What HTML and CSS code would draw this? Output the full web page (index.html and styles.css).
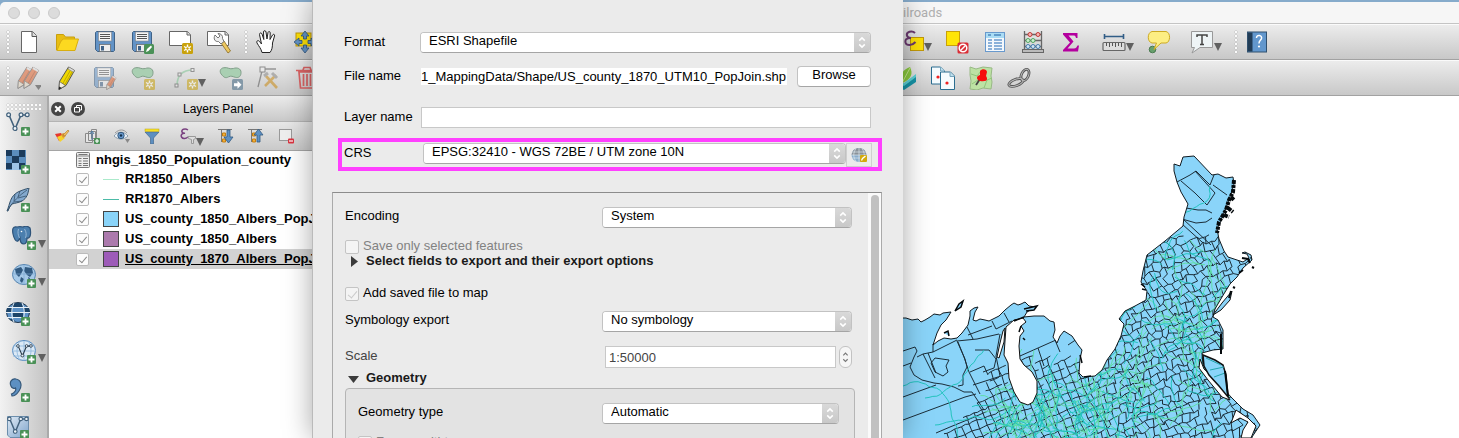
FILE: index.html
```html
<!DOCTYPE html>
<html lang="en">
<head>
<meta charset="utf-8">
<title>Railroads</title>
<link rel="stylesheet" href="styles.css">
</head>
<body>
<svg class="defs" aria-hidden="true">
  <defs>
    <linearGradient id="plate" x1="0" y1="0" x2="1" y2="1"><stop offset="0" stop-color="#dfeaf5"/><stop offset="1" stop-color="#7fa5cc"/></linearGradient>
  </defs>
  <symbol id="plus" viewBox="0 0 9 9"><rect width="9" height="9" rx="1" fill="#4a9157"/><path d="M4.5 1.5v6M1.5 4.5h6" stroke="#fff" stroke-width="1.8"/></symbol>
  <symbol id="spark" viewBox="0 0 11 11"><rect width="11" height="11" rx="1.5" fill="#c9a20c"/><path d="M5.500 1.500v8M2 3.500l7 4M9 3.500l-7 4" stroke="#fff" stroke-width="1.400"/><circle cx="5.500" cy="5.500" r="1.700" fill="#c9a20c" stroke="#fff"/></symbol>
  <symbol id="floppy" viewBox="0 0 20 21"><path d="M1.500 .5h17l1 1v18l-1 1h-16l-2-2v-17z" fill="#6393c6" stroke="#3f6287"/><rect x="3.500" y="1" width="13" height="9" fill="#f5f5f5" stroke="#888" stroke-width=".6"/><path d="M5 3.500h10M5 5.500h10M5 7.500h10" stroke="#555"/><rect x="4.500" y="13.500" width="11" height="7" fill="#eee" stroke="#666" stroke-width=".7"/><rect x="6" y="15" width="3" height="4.500" fill="#3f6287"/></symbol>
  <symbol id="pencil" viewBox="0 0 18 24"><path d="M10.500 1l6 3.500-8.500 15-7 4 .5-8z" fill="#efd800" stroke="#555" stroke-width="1"/><path d="M11 1l5.500 3.300-1 1.900L10 3z" fill="#ddd" stroke="#777" stroke-width=".6"/><path d="M12 5L4 19M14 6L6 20" stroke="#b29c00" stroke-width=".8"/><path d="M1.500 15.500l6 4-6.500 4z" fill="#f2eee1" stroke="#555" stroke-width=".7"/><path d="M1.200 20.500l2.500 1.500-3 1.700z" fill="#222"/></symbol>
  <symbol id="redpencil" viewBox="0 0 18 24"><path d="M10.500 1l6 3.500-8.500 15-7 4 .5-8z" fill="#e06430" stroke="#555" stroke-width="1"/><path d="M11 1l5.500 3.300-1 1.900L10 3z" fill="#ddd"/><path d="M13 5L5 19" stroke="#a8431c" stroke-width="1"/><path d="M1.500 15.500l6 4-6.500 4z" fill="#e9dcc6" stroke="#555" stroke-width=".7"/></symbol>
  <symbol id="blob" viewBox="0 0 24 14"><path d="M3 9C0 6 1 2 5 1.500c4-.8 6 2 10 .8 4-1.500 8 .2 8 4s-2 6.200-6 5.200c-3-.7-4-2-7-.5-3 1.800-5 .5-7-2z" fill="#a9cfb2" stroke="#7d9c86"/></symbol>
  <symbol id="updown" viewBox="0 0 8 14"><path d="M1 5l3-3 3 3M1 9l3 3 3-3" fill="none" stroke="#fff" stroke-width="1.600"/></symbol>
  <symbol id="nodes" viewBox="0 0 24 20"><path d="M3 3l6 14 6-14h7" fill="none" stroke="currentColor" stroke-width="1.600"/><g fill="#eef4f8" stroke="currentColor" stroke-width="1.200"><circle cx="2.600" cy="2.800" r="1.900"/><circle cx="9" cy="16.500" r="2"/><circle cx="15" cy="2.800" r="1.900"/><circle cx="21.200" cy="2.800" r="1.900"/></g></symbol>
</svg>

<div class="window">
  <header class="titlebar">
    <div class="lights"><span class="light"></span><span class="light"></span><span class="light"></span></div>
    <span class="title">Railroads</span>
  </header>

  <div class="toolbar">
    <div class="tools">
      <span class="grip"></span>
      <button class="tool" aria-label="New project"><svg class="icon" viewBox="0 0 24 24"><path d="M4.500 1.500h11l4 4v17h-15z" fill="#fff" stroke="#666"/><path d="M15 1.500v5h5" fill="#ddd" stroke="#555"/></svg></button>
      <button class="tool" aria-label="Open project"><svg class="icon" viewBox="0 0 24 24"><path d="M1.500 20V4.500h7l2 2.500h9V20z" fill="#e8bd12" stroke="#c89f0d"/><path d="M2 20.500L5.500 12 8 9h15.500L20 20.500z" fill="#fcd920" stroke="#d8ae10"/></svg></button>
      <button class="tool" aria-label="Save project"><svg class="icon" viewBox="0 0 24 24"><use href="#floppy" x="2" y="1" width="20" height="21"/></svg></button>
      <button class="tool" aria-label="Save project as"><svg class="icon" viewBox="0 0 24 24"><use href="#floppy" x="1" y="1" width="20" height="21"/><rect x="13" y="14" width="10" height="10" rx="1.500" fill="#4a9157"/><path d="M15 22l1-3 4-3.500 1 1.500-3.500 4z" fill="#fff"/></svg></button>
      <button class="tool" aria-label="New print composer"><svg class="icon" viewBox="0 0 24 24"><path d="M.5 1.500h18l3 3v11H.5z" fill="#fff" stroke="#666"/><path d="M18 1.500v3.500h4" fill="#ddd" stroke="#666"/><use href="#spark" x="13" y="13" width="11" height="11"/></svg></button>
      <button class="tool" aria-label="Composer manager"><svg class="icon" viewBox="0 0 24 24"><path d="M.5 1.500h18l3 3v11H.5z" fill="#fff" stroke="#666"/><path d="M18 1.500v3.500h4" fill="#ddd" stroke="#666"/><path d="M14 13l3-2 6.500 10-2.500 2z" fill="#edc860" stroke="#886a25" stroke-width=".8"/><path d="M8 5l3 3 2-2-2-2.500c3 0 5 2 4.500 5l1.500 3-3 2.500-2.500-2.500C8 12 6 9 8 5z" fill="#eee" stroke="#666" stroke-width=".9"/></svg></button>
      <span class="grip"></span>
      <button class="tool" aria-label="Pan map"><svg class="icon" viewBox="0 0 24 24"><path d="M7 22.500c-1-4-3-6-5-9.500-1-2.500 1.500-3 2.500-1.500L6.500 14 4.500 4.500c0-2 2-2 2.500-.5l1.800 5.500L8.500 2c.2-1.800 2.200-1.800 2.500 0l1 7 1-6.500c.5-1.500 2.200-1.200 2.200.4L15 9.500 17.500 5c1-1.400 2.600-.5 2 1L17.500 13c0 4-.5 7-2.500 9.500z" fill="#fff" stroke="#222" stroke-width="1"/></svg></button>
      <button class="tool" aria-label="Pan to selection"><svg class="icon" viewBox="0 0 24 24"><rect x="3" y="3" width="15" height="13" fill="#ffe207" stroke="#c39a08"/><path d="M12 1l4 5h-2.500v3h-3V6H8zM12 23l4-5h-2.500v-3h-3v3H8zM1 12l5-4v2.500h3v3H6V16zM23 12l-5-4v2.500h-3v3h3V16z" fill="#6393c6" stroke="#31567d" stroke-width=".8"/></svg></button>
    </div>
    <div class="tools">
      <button class="tool tool-menu" aria-label="Select by expression"><svg class="icon" viewBox="0 0 24 24"><rect x="10.500" y="7.500" width="13" height="13" fill="#ffe207" stroke="#c39a08"/><path d="M15 3c-3-3-9-1-8 2.500C7.500 8 11 8 11 8c-5 0-6 2-5.500 4.500C6.500 16 12 16 15.500 12" fill="none" stroke="#6b3a70" stroke-width="2"/></svg><span class="caret"></span></button>
      <button class="tool" aria-label="Deselect all"><svg class="icon" viewBox="0 0 24 24"><rect x="1.500" y="1.500" width="13" height="14" fill="#ffe507" stroke="#c9a10a"/><rect x="12.500" y="12.500" width="11" height="11" rx="1.500" fill="#da2e36"/><circle cx="18" cy="18" r="3.800" fill="none" stroke="#fff" stroke-width="1.500"/><path d="M15.500 20.500l5-5" stroke="#fff" stroke-width="1.500"/></svg></button>
      <button class="tool" aria-label="Attribute table"><svg class="icon" viewBox="0 0 24 24"><rect x="2.500" y="2.500" width="19" height="19" fill="#f4f8fc" stroke="#6899cd"/><rect x="3" y="3" width="18" height="5" fill="#aadcf4"/><path d="M5 5h3M11 5h7" stroke="#4c86bd" stroke-width="1.600"/><path d="M5 10h4M11 10h8M5 13h4M11 13h8M5 16h4M11 16h8M5 19h4M11 19h8" stroke="#6899cd" stroke-width="1.300"/></svg></button>
      <button class="tool" aria-label="Field calculator"><svg class="icon" viewBox="0 0 24 24"><path d="M3.500 1v20M20.500 1v20M3 4.500h18M3 10.500h18M3 16.500h18" stroke="#666" stroke-width="1.300"/><rect x="1.500" y="19.500" width="21" height="3" fill="#bbb" stroke="#666"/><g fill="#f6b5b3" stroke="#c13735"><circle cx="9" cy="4.500" r="2"/><circle cx="17" cy="4.500" r="2"/></g><g fill="#c9efcd" stroke="#53a462"><circle cx="7" cy="10.500" r="2"/><circle cx="12" cy="10.500" r="2"/></g><g fill="#cfe4f5" stroke="#447cab"><circle cx="7" cy="16.500" r="2"/><circle cx="12" cy="16.500" r="2"/><circle cx="17" cy="16.500" r="2"/></g></svg></button>
      <button class="tool" aria-label="Statistical summary"><svg class="icon" viewBox="0 0 24 24"><path d="M4 3h14.500v5h-1.500c-.5-2-1-2.500-3-2.500H9.500l5 6-6 7H15c2 0 2.500-1 3.500-3H20l-1 6H4v-1.500l7-7.500-7-8z" fill="#b4009e"/></svg></button>
      <button class="tool tool-menu" aria-label="Measure"><svg class="icon" viewBox="0 0 24 24"><path d="M2 6.500h20M2.500 4v5M21.500 4v5" stroke="#315d86" stroke-width="1.600"/><rect x="1" y="12.500" width="22" height="8" rx="1" fill="#ddd" stroke="#666" stroke-width="1.200"/><path d="M4.500 13v3M7.500 13v4M10.500 13v3M13.500 13v4M16.500 13v3M19.500 13v4" stroke="#555"/></svg><span class="caret"></span></button>
      <button class="tool" aria-label="Map tips"><svg class="icon" viewBox="0 0 24 24"><circle cx="5.500" cy="19.500" r="3.300" fill="#68a06c" stroke="#497a50"/><path d="M5 1.500h14c5 1 4.500 11 0 11.500h-5L7 19.500 9.500 13H5c-5-1-5-10.500 0-11.500z" fill="#fdee83" stroke="#cdaa23"/></svg></button>
      <button class="tool tool-menu" aria-label="Text annotation"><svg class="icon" viewBox="0 0 24 24"><path d="M1.500 1.500h21v16H10L2 23l2.500-5.500h-3z" fill="#eef4f6" stroke="#999"/><path d="M7 7V5h10v2M12 5v9.500M10 14.500h4" fill="none" stroke="#444" stroke-width="1.500"/></svg><span class="caret"></span></button>
      <span class="grip"></span>
      <button class="tool" aria-label="Help"><svg class="icon" viewBox="0 0 24 24"><rect x="2.500" y="2" width="19" height="20" fill="#6297cd" stroke="#30506e"/><rect x="3" y="2.500" width="4.500" height="19" fill="#213c56"/><path d="M11.500 8c0-4 6-3 5 .5-.8 2-2.500 2-2.500 5" fill="none" stroke="#fff" stroke-width="1.500"/><circle cx="14" cy="16.500" r="1.100" fill="#fff"/></svg></button>
    </div>
  </div>

  <div class="toolbar">
    <div class="tools">
      <span class="grip"></span>
      <button class="tool" aria-label="Current edits"><svg class="icon faded" viewBox="0 0 24 24"><use href="#redpencil" x="0" y="0" width="17" height="23"/><use href="#redpencil" x="6" y="0" width="17" height="23"/><path d="M18 19h7l-3.500 5z" fill="#444"/></svg></button>
      <button class="tool" aria-label="Toggle editing"><svg class="icon" viewBox="0 0 24 24"><use href="#pencil" x="3" y="0" width="18" height="24"/></svg></button>
      <button class="tool" aria-label="Save layer edits"><svg class="icon faded" viewBox="0 0 24 24"><use href="#floppy" x="1" y="1" width="20" height="21"/><use href="#redpencil" x="13" y="9" width="11" height="15"/></svg></button>
      <button class="tool" aria-label="Add feature"><svg class="icon" viewBox="0 0 24 24"><use href="#blob" x="0" y="0" width="23" height="14"/><g class="faded"><use href="#spark" x="13" y="13" width="11" height="11"/></g></svg></button>
      <button class="tool tool-menu" aria-label="Add circular string"><svg class="icon faded" viewBox="0 0 24 24"><path d="M3 20C3 10 8 4 19 4" fill="none" stroke="#7fc493" stroke-width="1.600"/><g fill="#eee" stroke="#555"><rect x="1" y="18" width="3" height="3"/><rect x="4" y="7" width="3" height="3"/><rect x="17" y="2.500" width="3" height="3"/></g><use href="#spark" x="13" y="13" width="11" height="11"/></svg><span class="caret"></span></button>
      <button class="tool" aria-label="Move feature"><svg class="icon" viewBox="0 0 24 24"><use href="#blob" x="0" y="0" width="23" height="14"/><rect x="13" y="13" width="11" height="11" rx="1.500" fill="#8499a8"/><path d="M15 17.200h3.500v-2.500l4 4-4 4v-2.500H15z" fill="#fff"/></svg></button>
      <button class="tool" aria-label="Node tool"><svg class="icon faded" viewBox="0 0 24 24"><path d="M6 3h13M5 5L1 21" fill="none" stroke="#555" stroke-width="1.300"/><rect x="3" y="1" width="5" height="5" fill="#eee" stroke="#444"/><path d="M8 20L19 9M9 10l11 12" stroke="#c98a13" stroke-width="2.600"/><path d="M15 7l5 5M7 10l4-3" stroke="#888" stroke-width="3"/></svg></button>
      <button class="tool" aria-label="Delete selected"><svg class="icon" viewBox="0 0 24 24"><path d="M4 6h16l-1.500 16h-13zM1 4.500h22M8 4l1-2.500h6L16 4M8.500 8v12M12 8v12M15.500 8v12" fill="none" stroke="#db6465" stroke-width="1.700"/></svg></button>
    </div>
    <div class="tools tools-plugins">
      <button class="tool" aria-label="Open layers"><svg class="icon" viewBox="0 0 24 24"><path d="M2 13l9 5 12-9v7l-12 8-9-5z" fill="#1693a6"/><path d="M2 13l9 4 12-9v3l-12 9-9-5z" fill="#5cd0d4"/><path d="M9 17C5 9 11 3 17 1c3 6 2 12-8 16z" fill="#89c93c"/><path d="M9 17l8-15" stroke="#c5e68f"/></svg></button>
      <button class="tool" aria-label="Copy coordinates"><svg class="icon" viewBox="0 0 24 24"><g fill="#f5fbfe" stroke="#2a6d90"><path d="M.5 1h9l4 4v13H.5z"/><path d="M9.500 6h10l4 4v13.500h-14z"/></g><path d="M9.500 1v4h4M19 6v4.500h4.500" fill="#bfe0ef" stroke="#76a5bd"/><circle cx="7" cy="11" r="1.600" fill="#ef2222"/><circle cx="16" cy="17" r="1.600" fill="#ef2222"/></svg></button>
      <button class="tool" aria-label="Pin point"><svg class="icon" viewBox="0 0 24 24"><path d="M1 1l6 2 7-2 9 1-1 8 1 6-1 7-8-1-6 2-7-1 1-8-1-6z" fill="#bde2a4" stroke="#98b985"/><path d="M2 8l6 2 4-5M15 22l3-8 5-2M3 18l6-4" stroke="#91c47a" fill="none"/><path d="M11 13L7 19" stroke="#444" stroke-width="1.800"/><path d="M11 5c2-3 7-2 7 1l-1 4c2 3 1 5-2 5-3 1-7-1-7-3s1-2 3-3z" fill="#f60d0d"/></svg></button>
      <button class="tool" aria-label="Link"><svg class="icon" viewBox="0 0 24 24"><g fill="none" stroke="#555" stroke-width="2.800"><ellipse cx="18" cy="9" rx="3.500" ry="6" transform="rotate(25 18 9)"/><ellipse cx="9" cy="16.500" rx="7.500" ry="3.200" transform="rotate(-20 9 16.500)"/></g><g fill="none" stroke="#bbb"><ellipse cx="18" cy="9" rx="3.500" ry="6" transform="rotate(25 18 9)"/><ellipse cx="9" cy="16.500" rx="7.500" ry="3.200" transform="rotate(-20 9 16.500)"/></g></svg></button>
    </div>
  </div>

  <main class="workspace">
    <nav class="sidebar" aria-label="Add layers">
      <span class="grip-flat"></span>
      <button class="add" aria-label="Add vector layer"><svg class="add-icon" viewBox="0 0 25 25"><g color="#42617c"><use href="#nodes" x="0" y="0" width="24" height="20"/></g><use href="#plus" x="15" y="15" width="9" height="9"/></svg></button>
      <button class="add" aria-label="Add raster layer"><svg class="add-icon" viewBox="0 0 25 25"><path d="M0 0h20v20H0z" fill="#5b8dbd"/><path d="M0 0h6v6H0zM13 0h6v7h-6zM6 6h7v7H6zM0 13h6v6H0zM13 13h6v6h-6z" fill="#1c3b5b"/><path d="M6 13h7v7H6z" fill="#9dc3e6"/><use href="#plus" x="15" y="15" width="9" height="9"/></svg></button>
      <button class="add" aria-label="Add SpatiaLite layer"><svg class="add-icon" viewBox="0 0 25 25"><path d="M1 23C4 16 4 8 12 4c4-2 8-3 11-4-1 6-2 10-7 13-4 2-7 2-10 3-2 2-3 4-4 7z" fill="#83a9ce" stroke="#36526b"/><path d="M2 22C7 13 14 7 21 2M8 13l1-7M12 9l2-6M8 14l8-1M12 10l8-2" stroke="#36526b" fill="none" stroke-width=".8"/><use href="#plus" x="15" y="15" width="9" height="9"/></svg></button>
      <button class="add add-menu" aria-label="Add PostGIS layer"><svg class="add-icon" viewBox="0 0 25 25"><path d="M5 1C1 0 0 3 1 8c1 5 3 8 5 7l2-3c0 4 1 6 4 6 3-.5 3-4 3-6 4 1 4-6 3-10-2-2-5-2-7-1C9 .5 7 .5 5 1z" fill="#4b7fae" stroke="#2e5379" stroke-width="1.200"/><path d="M6.500 3c-1 3-.5 6 1 9M12.500 3c2 3 2 6 1 9" stroke="#9dbcd8" fill="none" stroke-width=".9"/><circle cx="9.500" cy="5.500" r=".8" fill="#fff"/><use href="#plus" x="15" y="15" width="9" height="9"/></svg><span class="caret"></span></button>
      <button class="add add-menu" aria-label="Add WMS layer"><svg class="add-icon" viewBox="0 0 25 25"><ellipse cx="12" cy="10.500" rx="11.500" ry="10" fill="#a6c9e8" stroke="#5685b1"/><path d="M3 5l6-2 2 3-2 4-2 3-3-3zM13 3l7 1 1 5-3 4-3-2-3-4zM9 13l3 2-2 4-2-2zM16 13l2 1-1 3z" fill="#315a81"/><path d="M1 10h22M12 1v20" stroke="#7ba7d0" stroke-width=".7"/><use href="#plus" x="15" y="15" width="9" height="9"/></svg><span class="caret"></span></button>
      <button class="add" aria-label="Add WCS layer"><svg class="add-icon" viewBox="0 0 25 25"><ellipse cx="12" cy="10.500" rx="11.500" ry="10" fill="#5d92c7" stroke="#20364c"/><path d="M7 1h9l1 4H6zM1 6h5v5H0zM18 6h5l1 5h-6zM7 11h10v5H7zM3 17h4l3 3z" fill="#1c4469"/><path d="M1 5.500h22M0 10.500h24M1 15.500h22M8 1c-3 6-3 13 0 19M16 1c3 6 3 13 0 19" stroke="#e8f1f9" fill="none"/><use href="#plus" x="15" y="15" width="9" height="9"/></svg></button>
      <button class="add add-menu" aria-label="Add WFS layer"><svg class="add-icon" viewBox="0 0 25 25"><ellipse cx="12" cy="10.500" rx="11.500" ry="10" fill="#dce9f5" stroke="#5388bd"/><path d="M1 6h22M0 11h24M1 16h22M12 1v20M8 1c-4 6-4 13 0 19M16 1c4 6 4 13 0 19" stroke="#8ab5dc" fill="none" stroke-width=".8"/><g color="#263849"><use href="#nodes" x="4" y="4" width="17" height="14"/></g><use href="#plus" x="15" y="15" width="9" height="9"/></svg><span class="caret"></span></button>
      <button class="add" aria-label="Add delimited text layer"><svg class="add-icon" viewBox="0 0 25 25"><path d="M5 8C3 4 6 0 10 1c6 1 6 8 3 12-2 3-5 5-7 5l-.5-2c3-1 5-4 4-6-1 1-4 0-4.500-2z" fill="#5d90c2" stroke="#35587a" stroke-width="1.200"/><use href="#plus" x="15" y="15" width="9" height="9"/></svg></button>
      <button class="add" aria-label="Add virtual layer"><svg class="add-icon" viewBox="0 0 25 25"><path d="M1.500.5h21v21H4L1.500 19z" fill="url(#plate)" stroke="#6c8eac"/><g color="#42617c"><use href="#nodes" x="1" y="0" width="22" height="19"/></g><use href="#plus" x="14" y="14" width="9" height="9"/></svg></button>
    </nav>

    <section class="layers" aria-label="Layers Panel">
      <div class="layers-head">
        <button class="round" aria-label="Close panel"><svg viewBox="0 0 14 14"><circle cx="7" cy="7" r="7" fill="#444"/><path d="M4.200 4.200l5.600 5.600M9.800 4.200L4.200 9.800" stroke="#fff" stroke-width="2"/></svg></button>
        <button class="round" aria-label="Float panel"><svg viewBox="0 0 14 14"><circle cx="7" cy="7" r="7" fill="#444"/><path d="M5.500 5V3.500h5V8H9M3.500 5.500H8.500v4.500h-5z" fill="none" stroke="#fff"/></svg></button>
        <h2 class="layers-title">Layers Panel</h2>
      </div>
      <div class="layers-tools">
        <button class="mini" aria-label="Style"><svg viewBox="0 0 16 16"><path d="M1 6l6-1 3 5-5 3z" fill="#e5372f"/><path d="M3 9l5-2 3 3-5 4z" fill="#f5d22b"/><path d="M7 6l3-1 2 3-3 2z" fill="#d89333"/><path d="M9 7l5-5 1 1-4 5z" fill="#efbd62" stroke="#ad7a25" stroke-width=".6"/></svg></button>
        <button class="mini" aria-label="Add group"><svg viewBox="0 0 16 16"><path d="M1.500 5.500h7v9h-7zM4.500 3.500h7v9h-7zM7.500 1.500h5v9h-5z" fill="#e5e5e5" stroke="#888"/><path d="M8 4v8M6 6l2-3 2 3" stroke="#507da5" fill="none"/><use href="#plus" x="10" y="10" width="6" height="6"/></svg></button>
        <button class="mini" aria-label="Visibility"><svg viewBox="0 0 16 16"><path d="M0 8c4-5 10-5 14 0-4 4-10 4-14 0z" fill="#eef3f8" stroke="#899bab"/><circle cx="7" cy="7.500" r="3.200" fill="#6a9bd0" stroke="#345a7e"/><circle cx="7" cy="7.500" r="1.300" fill="#17324b"/><path d="M1 5c4-4 9-4 12 0" stroke="#999" fill="none"/><path d="M11 11h5l-2.500 4z" fill="#888"/></svg></button>
        <button class="mini" aria-label="Filter legend"><svg viewBox="0 0 16 16"><path d="M1 4h14L9.500 10v6h-3v-6z" fill="#5d8fc0" stroke="#42698f" stroke-width=".7"/><rect x="1" y="1" width="14" height="2.500" fill="#f7e125" stroke="#b8a218" stroke-width=".5"/></svg></button>
        <button class="mini mini-menu" aria-label="Filter by expression"><svg viewBox="0 0 16 16"><path d="M8 2C5 0 1 1.500 2 4c1 1.500 3 1.300 3 1.300C2 5 .5 7 1.500 9 3 11.500 6 10.500 8 9" fill="none" stroke="#7a4280" stroke-width="1.500"/><path d="M8 8.500h7.500v2l-2 1v4h-2v-4l-3-1z" stroke="#999" fill="#ddd"/></svg><span class="caret"></span></button>
        <button class="mini" aria-label="Expand all"><svg viewBox="0 0 16 16"><path d="M0 1.500h14M3.500 2v12M4 7h2M4 13h2" stroke="#777" fill="none"/><path d="M4.500 5h3v3h-3zM4.500 11h3v3h-3z" fill="#f3b03c" stroke="#c47f10"/><path d="M9 2h3v7h3l-4.500 6L6 9h3z" fill="#5d90c3" stroke="#345a80" stroke-width=".8"/></svg></button>
        <button class="mini" aria-label="Collapse all"><svg viewBox="0 0 16 16"><path d="M0 1.500h14M3.500 2v12M4 7h2M4 13h2" stroke="#777" fill="none"/><path d="M4.500 5h3v3h-3zM4.500 11h3v3h-3z" fill="#f3b03c" stroke="#c47f10"/><path d="M9 14h3V7h3l-4.500-6L6 7h3z" fill="#5d90c3" stroke="#345a80" stroke-width=".8"/></svg></button>
        <button class="mini" aria-label="Remove layer"><svg viewBox="0 0 16 16"><rect x="1.500" y="1.500" width="12" height="11" fill="#eee" stroke="#999"/><rect x="10" y="10.500" width="6" height="5" rx="1" fill="#da3440"/><path d="M11 13h4" stroke="#fff" stroke-width="1.200"/></svg></button>
      </div>
      <ul class="layer-list">
        <li class="layer"><svg class="table-icon" viewBox="0 0 14 16"><rect x=".5" y=".5" width="13" height="15" rx="1" fill="#eee" stroke="#777"/><path d="M1 4h12" stroke="#888"/><path d="M2.500 6.500h3M7 6.500h5M2.500 9h3M7 9h5M2.500 11.500h3M7 11.500h5M2.500 13.500h3M7 13.500h5M2.500 2.500h9" stroke="#777"/></svg>nhgis_1850_Population_county</li>
        <li class="layer"><label class="layer-label"><input class="tick" type="checkbox" checked><span class="line line-pale"></span>RR1850_Albers</label></li>
        <li class="layer"><label class="layer-label"><input class="tick" type="checkbox" checked><span class="line line-teal"></span>RR1870_Albers</label></li>
        <li class="layer"><label class="layer-label"><input class="tick" type="checkbox" checked><span class="swatch swatch-sky"></span>US_county_1850_Albers_PopJoin</label></li>
        <li class="layer"><label class="layer-label"><input class="tick" type="checkbox" checked><span class="swatch swatch-mauve"></span>US_county_1850_Albers</label></li>
        <li class="layer layer-current"><label class="layer-label"><input class="tick" type="checkbox" checked><span class="swatch swatch-violet"></span><span class="current-name">US_county_1870_Albers_PopJoin</span></label></li>
      </ul>
    </section>

    <section class="canvas" aria-label="Map">
      <svg class="map" viewBox="452 96 1007 342" preserveAspectRatio="xMinYMin slice">
        <defs>
          <path id="land-shape" d="M890 318l16 0 6 2 6-1 3 3 4-2 5-3 4-3 6 1 3-2 8-1-5 8-5 5-4 8-4 12 5-4 6-3 7 1 6-1 5-5 6-8 2-9 0-5 4-3 4-1-3 5-2 8 3 1 4-2 5 1 4 1 4-2 6-3 6-6 6-5 3-2 4 2 3-1 4-2 4 4 6 1-8 5-3 5 10-1 10 0 6 5 4 1 1 8-2 7 4 6 3-7 4-5 8 5 6 9 4 5-2 9-1 14 4 4 12-1 7-6 5-10 8-11 6-13 3-12-5-5 6-8 10-5 11-6 1-9-6-9 2-11 4-16 18-14 18-15 1-9 4-13-7-12-4-10-3-11 0-7 6 2 3-9 11-1 18 19 6-1 8 4 7-1 1 7-3 10-5 14-5 12-4 9 2 10 5 12 4 6 9 3 6 2 6-4-2-4-5-1 3-1 6 3 1 5-9 8-6 9-7 7-8 13-7 12-2 8 5 3 5 10 0 19-10 1-11 3 1 12 10 10 10 13 8 9 12 12 10 6 7 10-8 12V460H890z"/>
          <clipPath id="land"><use href="#land-shape"/></clipPath>
        </defs>
        <use href="#land-shape" fill="#8ad4f9"/>
        <g clip-path="url(#land)" fill="none">
          <path id="counties" stroke="#1b2d38" stroke-width="1"/>
          <path d="M903 351l12-4 2 4-3 6-4 10 4 8 8 5 12 3 8 1 12 3 10 5 8 0 12 18M903 366l8-3M903 397l33-12M903 420l62-23 11-3M917 357l6-3 10-2v-8M923 354l12 24M928 353l8 20M933 352l24-12M949 360l-3 6 2 6-5 4-8-4-4-9 4-5zM957 341l8 18 2 8-4 8 0 10-5 1M958 342l6 15 5 15 6 12 5 10M957 341l20-2 22-5M967 327l6 12M968 335l24-9M992 321l4 8 16-8M1004 313l5 9M975 350l14 0 7 9-2 9-11 4M970 372l14-6 4 9M973 385l28-9M936 433l14-6 22-9 16-7M1020 356l36-16M1038 348l6 18M1055 340l5 12M1068 345l12-8M1000 376l-4-20 4-22M1177 182l13-7 6-4 14 14 4-10M1181 181l14 12 12 12 8-12-20-22M1213 185l14 10M1186 208l12 2 8 0 6 3M1182 219l14 4 10-1 6-4M1183 219l28 26M1182 224l20 18" stroke="#1b2d38"/>
          <path id="rails-old" stroke="#5fdda6" stroke-width="1"/>
          <path id="rails-new" stroke="#23c3bd" stroke-width="1"/>
        </g>
        <use href="#land-shape" fill="none" stroke="#111b21" stroke-width="1"/>
        <path d="M1006 327l8-7 9-2 3 4-5 4 3 5-4 5-1 10 1 13 4 6 8 7 5 9 0 12-4 9-5 3-8-3-6-10-5-14-1-15-4-8z" fill="#fff" stroke="#111"/>
        <path d="M1003 331l-3 12-3 14 2 1 5-16 1-14z" fill="#fff" stroke="#111"/>
        <path d="M1200 359l4 10 11 10 8 8 7 13-8-3-14-17-9-12z" fill="#fff" stroke="#111"/>
        <path d="M1231 423l9-5 8 4-5 8-2 8h10l5-12-8-8-12-8z" fill="#fff" stroke="#111"/>
        <path d="M1203 355l12 5 8 5 3 10 2 22-9-11-10-11-5-9z" fill="#8ad4f9" stroke="#111" stroke-width="1.500"/>
        <path d="M1206 358l15 7M1210 370l14-3M1214 377l11-4" stroke="#23a5ad"/>
        <path d="M1213 315l9-12 10-12-2 9-9 10z" fill="#8ad4f9" stroke="#111"/>
        <path d="M1225 371l3 25M1221 334v20M1231 291l-2 7M1242 258l6 1 2 4M1252 267l2 1M1239 273l4-3M1233 287l2 1" fill="none" stroke="#050a0d" stroke-width="2"/>
        <path d="M1234 180l-1 12-4 8-3 10-7 12-2 11M1231 197l3 3M1228 208l5 4M1224 215l5 2" fill="none" stroke="#050a0d" stroke-width="4" stroke-dasharray="4 1 3 1"/>
        <path d="M955 311l4-7 4-3-2 6zM944 333l4-2 1 5M1024 309l13-3-3 4-8 1M1014 321l10-4M1021 326l-2 6M1023 338l2 2M1080 355l2 8M1084 377l7-1M1141 284l4 3M1142 289l4 1" fill="#8ad4f9" stroke="#050a0d" stroke-width="1.500"/>
      </svg>
    </section>
  </main>
</div>

<form class="sheet">
  <div class="row">
    <label for="format">Format</label>
    <span class="pick"><select id="format"><option>ESRI Shapefile</option></select><svg class="pick-end"><use href="#updown"/></svg></span>
  </div>
  <div class="row row-file">
    <label for="file">File name</label>
    <input class="file" id="file" type="text" value="1_MappingData/Shape/US_county_1870_UTM10_PopJoin.shp">
    <button class="browse" type="button">Browse</button>
  </div>
  <div class="row row-layer">
    <label for="layer">Layer name</label>
    <input class="field" id="layer" type="text">
  </div>
  <div class="row row-crs">
    <label for="crs">CRS</label>
    <span class="pick"><select id="crs"><option>EPSG:32410 - WGS 72BE / UTM zone 10N</option></select><svg class="pick-end"><use href="#updown"/></svg></span>
    <button class="crs-button" type="button" aria-label="Select CRS"><svg viewBox="0 0 16 16"><ellipse cx="8" cy="8" rx="7.500" ry="7" fill="#8aadcb"/><path d="M.5 8a7.500 7 0 0 1 15 0z" fill="#8a9299"/><path d="M1 5h14M0 8h16M1 11h14M8 1v14M5 1.500C2 6 2 10 5 14.500M11 1.500c3 4.500 3 8.500 0 13" stroke="#dbe6ef" stroke-width=".7" fill="none"/><rect x="9" y="8" width="7" height="7" rx="1" fill="#d2aa0c"/><path d="M10.500 13.500l1-2 3-2.500" stroke="#fff" fill="none" stroke-width="1.300"/></svg></button>
  </div>

  <div class="panel">
    <div class="options">
      <div class="option">
        <label for="encoding">Encoding</label>
        <span class="pick"><select id="encoding"><option>System</option></select><svg class="pick-end"><use href="#updown"/></svg></span>
      </div>
      <label class="check check-off"><input class="box" type="checkbox" disabled>Save only selected features</label>
      <button class="disclose" type="button"><svg viewBox="0 0 14 14"><path d="M4 2l7 5.500L4 13z" fill="#3b3b3b"/></svg>Select fields to export and their export options</button>
      <label class="check check-map"><input class="box" type="checkbox" checked>Add saved file to map</label>
      <div class="option option-symbology">
        <label for="symbology">Symbology export</label>
        <span class="pick"><select id="symbology"><option>No symbology</option></select><svg class="pick-end"><use href="#updown"/></svg></span>
      </div>
      <div class="option option-scale">
        <label for="scale">Scale</label>
        <span class="spin"><input class="field" id="scale" type="text" value="1:50000"><button class="stepper" type="button" aria-label="Step scale"><svg viewBox="0 0 8 14"><path d="M1.500 5L4 2.500 6.500 5M1.500 9.500L4 12l2.500-2.500" fill="none" stroke="#777" stroke-width="1.300"/></svg></button></span>
      </div>
      <button class="disclose disclose-geometry" type="button"><svg viewBox="0 0 14 14"><path d="M1 5h11l-5.500 7z" fill="#3b3b3b"/></svg>Geometry</button>
      <div class="group">
        <div class="option option-type">
          <label for="geometry">Geometry type</label>
          <span class="pick"><select id="geometry"><option>Automatic</option></select><svg class="pick-end"><use href="#updown"/></svg></span>
        </div>
        <label class="check check-off check-multi"><input class="box" type="checkbox" disabled>Force multi-type</label>
      </div>
    </div>
    <div class="scroll"><span class="thumb"></span></div>
  </div>
</form>
<script src="map.js"></script>
</body>
</html>
```
FILE: styles.css
```css
* { box-sizing: border-box; }
body { margin: 0; height: 100vh; overflow: hidden; position: relative; background: #86abcb; font: 13px/16px "Liberation Sans", Arial, sans-serif; color: #000; }
button { padding: 0; border: 0; background: none; font: inherit; color: inherit; }
input, select { font: inherit; color: inherit; margin: 0; }
svg { display: block; }
.defs { position: absolute; width: 0; height: 0; }

.window { height: 100vh; padding-top: 2px; display: flex; flex-direction: column; }
.titlebar { flex: none; height: 22px; display: flex; align-items: center; background: #f6f6f6; border-bottom: 1px solid #c4c4c4; border-top-left-radius: 5px; }
.lights { width: 888px; flex: none; display: flex; gap: 8px; padding-left: 8px; }
.light { width: 12px; height: 12px; border-radius: 50%; background: #dcdcdc; border: 1px solid #cacaca; }
.title { font-family: Roboto, sans-serif; color: #b0b0b0; }

.toolbar { flex: none; height: 36px; display: flex; background: linear-gradient(#ececec, #c8c8c8); border-bottom: 1px solid #a2a2a2; border-top: 1px solid #fafafa; }
.tools { display: flex; align-items: center; }
.tools:first-child { flex: none; width: 888px; }
.tools-plugins { margin-left: -2px; }
.grip { flex: none; width: 10px; height: 24px; background: radial-gradient(circle, #fafafa 1px, #bdbdbd 1px, transparent 2px) 6px 0 / 4px 4px repeat-y; }
.tool { flex: none; width: 38px; height: 34px; display: flex; align-items: center; justify-content: center; }
.tool-menu { width: 50px; padding-left: 6px; }
.icon { width: 24px; height: 24px; flex: none; }
.faded { opacity: .55; }
.caret { flex: none; width: 8px; height: 8px; margin-top: 10px; background: #606060; clip-path: polygon(0 0, 100% 0, 50% 100%); }

.workspace { flex: 1; min-height: 0; display: flex; }
.sidebar { flex: none; width: 49px; overflow: hidden; padding: 7px 0 0 6px; background: linear-gradient(90deg, #f2f2f2, #c4c4c4); border-right: 2px solid #aaa; }
.grip-flat { display: block; width: 36px; height: 8px; margin-bottom: 1px; background: radial-gradient(circle, #fafafa 1px, #c8c8c8 1px, transparent 2px) 0 0 / 4px 4px; }
.add { width: 40px; height: 38px; display: flex; align-items: flex-start; }
.add-menu { padding-left: 6px; }
.add-icon { width: 25px; height: 25px; flex: none; }
.add .caret { margin-top: 14px; margin-left: 1px; }

.layers { flex: none; width: 403px; background: #fff; }
.layers-head { height: 26px; display: flex; align-items: center; gap: 6px; padding-left: 2px; background: linear-gradient(#ececec, #c9c9c9); border-bottom: 1px solid #b4b4b4; }
.round { width: 14px; height: 14px; }
.layers-title { margin: 0; padding-left: 92px; font-size: 12px; font-weight: normal; }
.layers-tools { height: 29px; display: flex; align-items: center; gap: 14px; padding-left: 5px; background: linear-gradient(#e8e8e8, #c9c9c9); border-bottom: 1px solid #a5a5a5; }
.mini { width: 16px; height: 16px; display: flex; flex: none; }
.mini svg { width: 16px; height: 16px; flex: none; }
.mini-menu { width: 24px; margin-left: 6px; }
.layer-list { list-style: none; margin: 0; padding: 0; font-weight: bold; }
.layer { height: 20px; padding-left: 27px; display: flex; align-items: center; white-space: nowrap; }
.layer:first-child { height: 18px; }
.layer-label { display: flex; align-items: center; }
.layer-current { background: #d2d2d2; }
.current-name { text-decoration: underline; }
.table-icon { width: 14px; height: 16px; margin-right: 6px; }
.tick { appearance: none; width: 13px; height: 13px; margin-right: 14px; border: 1px solid #bbb; border-radius: 2px; background: #fcfcfc; position: relative; }
.tick::before { content: ""; position: absolute; left: 4px; top: 1px; width: 3px; height: 7px; border: solid #8a8a8a; border-width: 0 1px 1px 0; transform: rotate(40deg); }
.line { width: 16px; height: 1px; margin-right: 6px; }
.line-pale { background: #abeacb; }
.line-teal { background: #4bbba7; }
.swatch { width: 16px; height: 16px; margin-right: 6px; border: 1px solid #444; }
.swatch-sky { background: #8ad4f9; }
.swatch-mauve { background: #ac7aad; }
.swatch-violet { background: #9d5bb8; }

.canvas { flex: 1; min-width: 0; background: #fff; overflow: hidden; }
.map { width: 100%; height: 100%; }

.sheet { position: absolute; left: 312px; top: 0; bottom: 0; width: 591px; overflow: hidden; display: flex; flex-direction: column; padding: 32px 21px 0 19px; background: #ebebeb; border-left: 1px solid #bababa; box-shadow: 0 0 26px rgba(0, 0, 0, .35); }
.row { flex: none; display: grid; grid-template-columns: 76px 1fr; align-items: center; padding: 0 11px 0 12px; height: 21px; }
.row label { padding-bottom: 2px; }
.row-file { grid-template-columns: 77px 1fr 74px; margin-top: 13px; }
.row-layer { grid-template-columns: 77px 1fr; margin-top: 20px; }
.row-crs { grid-template-columns: 79px 1fr 26px; height: 33px; margin: 10px 0 0 6px; padding: 0 6px 0 2px; border: 4px solid #ff40ff; }
.row-crs .pick { margin-top: -2px; }
.row-crs label { padding-bottom: 3px; }
.pick { display: flex; height: 21px; border: 1px solid #c2c2c2; border-bottom-color: #a5a5a5; border-radius: 4px; overflow: hidden; background: #fff; }
.pick select { appearance: none; flex: 1; min-width: 0; border: 0; background: #fff; padding: 0 0 3px 8px; outline: none; }
.pick-end { width: 16px; height: 19px; padding: 3px 4px; background: linear-gradient(#d9d9d9, #c8c8c8); flex: none; }
.file { width: calc(100% - 10px); height: 17px; padding: 0; border: 0; background: #fff; }
.browse { height: 21px; padding-bottom: 3px; background: #fff; border: 1px solid #c2c2c2; border-bottom-color: #a5a5a5; border-radius: 4px; }
.field { width: 100%; height: 21px; border: 1px solid #c8c8c8; background: #fff; padding: 0 3px; }
.crs-button { height: 24px; display: flex; align-items: center; justify-content: center; border: 1px solid #cfcfcf; }
.crs-button svg { width: 16px; height: 16px; }

.panel { flex: 1; min-height: 0; margin-top: 21px; display: flex; border: 1px solid #aaa; border-top-color: #8c8c8c; border-bottom: 0; }
.options { flex: 1; min-width: 0; overflow: hidden; padding: 14px 0 0 12px; }
.option { display: grid; grid-template-columns: 257px 250px; align-items: center; height: 21px; }
.option label { padding-bottom: 3px; }
.check { display: flex; align-items: center; gap: 4px; height: 15px; }
.check-off { margin-top: 10px; color: #828282; }
.box { appearance: none; width: 14px; height: 14px; border: 1px solid #c4c4c4; border-radius: 2px; background: #f4f4f4; position: relative; top: 1px; }
.box:checked::before { content: ""; position: absolute; left: 4px; top: 1px; width: 4px; height: 8px; border: solid #cacaca; border-width: 0 1px 1px 0; transform: rotate(40deg); }
.disclose { display: flex; align-items: center; gap: 5px; height: 16px; padding-left: 2px; font-weight: bold; color: #1a1a1a; }
.disclose svg { width: 14px; height: 14px; }
.check-map { margin-top: 16px; }
.option-symbology { margin-top: 11px; }
.option-scale { height: 22px; margin-top: 14px; color: #444; }
.spin { display: flex; gap: 3px; padding-left: 3px; }
.spin .field { width: 233px; height: 22px; }
.stepper { width: 13px; height: 22px; padding: 3px 2px; background: #f6f6f6; border: 1px solid #c2c2c2; border-radius: 6px; }
.disclose-geometry { margin-top: 2px; }
.group { width: 510px; height: 90px; margin-top: 2px; padding: 14px 12px 0; background: #e3e3e3; border: 1px solid #b5b5b5; border-radius: 4px; }
.option-type { grid-template-columns: 244px 237px; }
.scroll { flex: none; width: 13px; padding: 2px 2px 0 3px; background: #fafafa; }
.thumb { display: block; height: 100%; background: #c1c1c1; border-radius: 4px 4px 0 0; }
```
FILE: map.js
```js
// Draws the county mesh and the railroads over the land shape.
let seed = 1870;
const rand = () => (seed = (seed * 16807) % 2147483647) / 2147483647;

const STEP = 8;
const TILT = -0.38;
const cols = 116;
const rows = 66;
const origin = { x: 880, y: 330 };

const vertices = [];
for (let i = 0; i < rows; i++) {
  vertices.push([]);
  for (let j = 0; j < cols; j++) {
    const u = (j - 10) * STEP / 2;
    const v = (i - 14) * STEP;
    const x = origin.x + u * Math.cos(TILT) - v * Math.sin(TILT);
    const y = origin.y + u * Math.sin(TILT) + v * Math.cos(TILT);
    const wobble = x > 1090 ? 4.2 : 1.8;
    vertices[i].push([x + (rand() - 0.5) * wobble, y + (rand() - 0.5) * wobble]);
  }
}

function settled([x, y]) {
  if (x < 985) return y > 438 - (x - 938) * 0.9;
  if (x < 1020) return y > 366;
  if (x < 1085) return y > 356;
  return y > 236;
}

const put = ([x, y]) => x.toFixed(1) + " " + y.toFixed(1);
let counties = "";
for (let i = 0; i < rows - 1; i++) {
  for (let j = 0; j < cols - 1; j++) {
    const p = vertices[i][j];
    if (!settled(p)) continue;
    const offset = p[0] > 1090 ? i : 0;
    if (rand() > 0.1) counties += `M${put(p)}L${put(vertices[i][j + 1])}`;
    if ((j + offset) % 2 === 0) counties += `M${put(p)}L${put(vertices[i + 1][j])}`;
  }
}
document.getElementById("counties").setAttribute("d", counties);

function route(x, y, heading, length) {
  let d = `M${x} ${y}`;
  for (let k = 0; k < length; k++) {
    heading += (rand() - 0.5) * 0.9;
    x += Math.cos(heading) * 4;
    y += Math.sin(heading) * 4;
    d += `L${x.toFixed(1)} ${y.toFixed(1)}`;
  }
  return d;
}

function network(count, length) {
  let d = "";
  for (let k = 0; k < count; k++) {
    const x = 1000 + rand() * 225;
    const top = x > 1140 ? 250 : x > 1110 ? 330 : 385;
    d += route(x, top + rand() * (438 - top), rand() * 6.28, length);
  }
  return d;
}

document.getElementById("rails-old").setAttribute("d",
  network(130, 10) + route(1215, 250, 1.7, 30) + route(1212, 262, 1.9, 30) + route(1190, 240, 0.9, 20));
document.getElementById("rails-new").setAttribute("d",
  network(100, 9) + route(903, 386, 0, 25) + route(925, 398, 0.3, 20) + route(935, 425, -0.4, 20) + route(1020, 404, 2.4, 18) + route(1210, 186, 1.5, 22));
```
